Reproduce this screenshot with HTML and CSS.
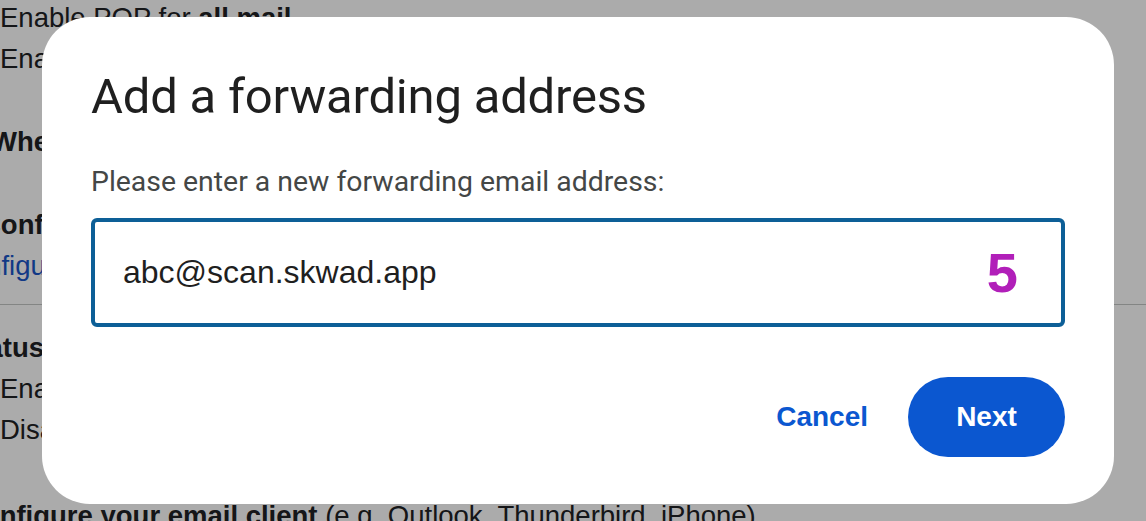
FILE: index.html
```html
<!DOCTYPE html>
<html lang="en">
<head>
    <meta charset="UTF-8">
    <meta name="viewport" content="width=device-width, initial-scale=1.0">
    <title>Forwarding and POP/IMAP</title>
    <link rel="stylesheet" href="styles.css">
</head>
<body>
    <div class="settings">
        <div class="row row-top">Enable POP for <b>all mail</b></div>
        <div class="row">Enable POP for <b>mail that arrives from now on</b></div>
        <div class="row row-head shift-1"><b>When messages are accessed with POP</b></div>
        <div class="row row-head shift-2"><b>Configure your email client</b></div>
        <div class="row shift-3"><a class="link" href="#">Configuration instructions</a></div>
        <hr class="divider">
        <div class="row row-head shift-4"><b>Status:</b></div>
        <div class="row">Enable IMAP</div>
        <div class="row">Disable IMAP</div>
        <div class="row shift-5"><b>Configure your email client</b> (e.g. Outlook, Thunderbird, iPhone)</div>
    </div>

    <div class="scrim">
        <div class="dialog">
            <h1 class="dialog-title">Add a forwarding address</h1>
            <p class="dialog-label">Please enter a new forwarding email address:</p>
            <div class="field">
                <span class="field-value">abc@scan.skwad.app</span>
                <span class="field-step">5</span>
            </div>
            <div class="actions">
                <button class="btn-text">Cancel</button>
                <button class="btn-filled">Next</button>
            </div>
        </div>
    </div>
</body>
</html>
```

FILE: styles.css
```css
* {
    margin: 0;
    padding: 0;
    box-sizing: border-box;
}

body {
    font-family: Roboto, "Liberation Sans", Arial, sans-serif;
    background: #ffffff;
    color: #202124;
    width: 1146px;
    height: 521px;
    overflow: hidden;
}

/* page behind the dialog */
.settings {
    font-family: "Liberation Sans", Arial, sans-serif;
    font-size: 27.5px;
    display: flex;
    flex-direction: column;
    white-space: nowrap;
}

.row {
    height: 41px;
    line-height: 41px;
}

.row-top {
    margin-top: -3px;
}

.row-head {
    margin-top: 42px;
}

.shift-1 { margin-left: -9px; }
.shift-2 { margin-left: -19px; margin-top: 42px; }
.shift-3 { margin-left: -49px; }
.shift-4 { margin-left: -40px; margin-top: 22px; }
.shift-5 { margin-left: -37px; margin-top: 45px; }

.link {
    color: #1a56c8;
    text-decoration: none;
}

.divider {
    border: none;
    border-top: 1px solid #c4c7c5;
    margin-top: 18px;
}

/* modal */
.scrim {
    position: fixed;
    inset: 0;
    background: rgba(0, 0, 0, 0.33);
    display: flex;
    align-items: center;
    padding: 17px 32px 17px 42px;
}

.dialog {
    background: #ffffff;
    border-radius: 48px;
    width: 100%;
    height: 487px;
    padding: 52px 49px 0 49px;
    display: flex;
    flex-direction: column;
}

.dialog-title {
    font-size: 49px;
    font-weight: 400;
    color: #1f1f1f;
    line-height: 56px;
    letter-spacing: -0.2px;
}

.dialog-label {
    font-size: 28.4px;
    color: #444746;
    margin-top: 40px;
    line-height: 34px;
}

.field {
    margin-top: 19px;
    height: 109px;
    border: 4px solid #0d5f97;
    border-radius: 6px;
    display: flex;
    align-items: center;
    justify-content: space-between;
    padding: 0 43px 0 28px;
}

.field-value {
    font-family: "Liberation Sans", Arial, sans-serif;
    font-size: 32px;
    color: #1f1f1f;
}

.field-step {
    font-family: "Liberation Sans", Arial, sans-serif;
    font-size: 56px;
    font-weight: 700;
    color: #b11fb9;
}

.actions {
    display: flex;
    justify-content: flex-end;
    align-items: center;
    gap: 40px;
    margin-top: 50px;
}

.btn-text,
.btn-filled {
    font-family: "Liberation Sans", Arial, sans-serif;
    font-size: 28px;
    font-weight: 700;
    border: none;
    cursor: pointer;
}

.btn-text {
    background: none;
    color: #0b57d0;
}

.btn-filled {
    background: #0b57d0;
    color: #ffffff;
    width: 157px;
    height: 80px;
    border-radius: 40px;
}
```
